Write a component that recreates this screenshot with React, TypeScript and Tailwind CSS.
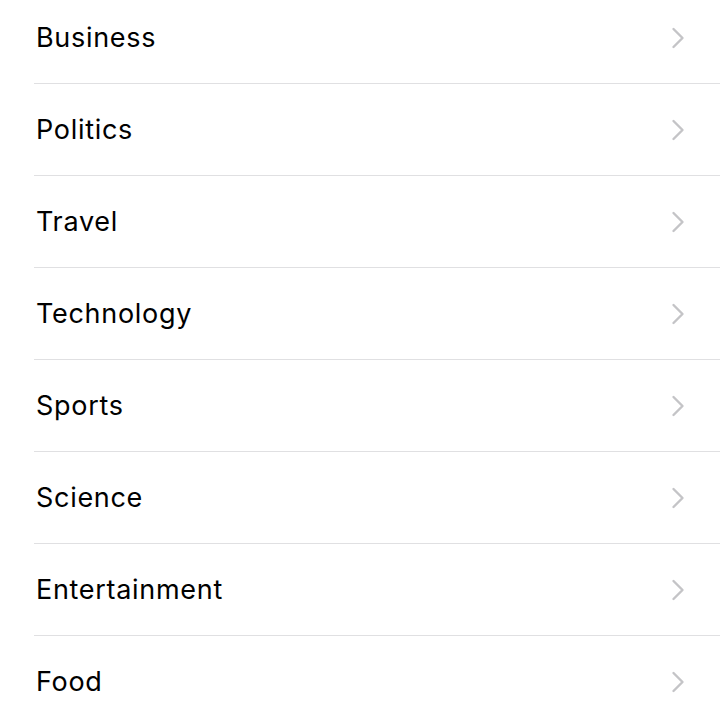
import React from "react";

const items = ["Business", "Politics", "Travel", "Technology", "Sports", "Science", "Entertainment", "Food"];

function Chevron() {
  return (
    <svg width="14" height="22" viewBox="0 0 14 22" fill="none" className="shrink-0">
      <path d="M2.5 2 L11.5 11 L2.5 20" stroke="#c4c4c7" strokeWidth="2.4" strokeLinecap="round" strokeLinejoin="round" />
    </svg>
  );
}

export default function App() {
  return (
    <div className="w-[720px] h-[720px] overflow-hidden bg-white" style={{ fontFamily: "Inter, 'Noto Sans', sans-serif" }}>
      <div className="-mt-[8px] flex flex-col">
        {items.map((t) => (
          <div key={t} className="pl-[34px]">
            <div className="h-[92px] flex items-center justify-between border-b border-[#e0e0e2] pr-[35px]">
              <span className="pl-[2px] text-[27px] leading-none text-black tracking-[0.7px]">{t}</span>
              <Chevron />
            </div>
          </div>
        ))}
      </div>
    </div>
  );
}
